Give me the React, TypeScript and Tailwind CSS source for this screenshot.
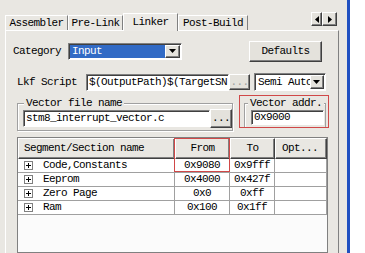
import React from 'react';

const font = "font-['Liberation_Mono',monospace] text-[11px] tracking-[-0.6px] leading-none text-black";

const Tab: React.FC<{ label: string; w: string; active?: boolean }> = ({ label, w, active }) => (
  <div
    className={`${w} flex items-center justify-center border-t border-l border-r border-t-white border-l-white border-r-[#808080] ${
      active ? 'h-[18px] bg-[#eceae6] -mb-px z-10' : 'h-[15px]'
    }`}
  >
    {label}
  </div>
);

const Raised: React.FC<{ className?: string; children?: React.ReactNode }> = ({ className = '', children }) => (
  <div
    className={`flex items-center justify-center border border-t-white border-l-white border-r-[#404040] border-b-[#404040] shadow-[inset_-1px_-1px_0_#808080] bg-[#e4e2dc] ${className}`}
  >
    {children}
  </div>
);

const Sunken: React.FC<{ className?: string; children?: React.ReactNode }> = ({ className = '', children }) => (
  <div
    className={`flex items-center border border-t-[#808080] border-l-[#808080] border-r-white border-b-white shadow-[inset_1px_1px_0_#404040] bg-white ${className}`}
  >
    {children}
  </div>
);

const Arrow: React.FC<{ dir: 'down' | 'left' | 'right' }> = ({ dir }) => {
  if (dir === 'down')
    return (
      <svg width="8" height="5" viewBox="0 0 8 5">
        <path d="M0 0h7L3.5 4z" fill="#000" />
      </svg>
    );
  return (
    <svg width="4" height="7" viewBox="0 0 4 7">
      <path d={dir === 'left' ? 'M4 0v7L0 3.5z' : 'M0 0v7l4-3.5z'} fill="#000" />
    </svg>
  );
};

const rows = [
  ['Code,Constants', '0x9080', '0x9fff'],
  ['Eeprom', '0x4000', '0x427f'],
  ['Zero Page', '0x0', '0xff'],
  ['Ram', '0x100', '0x1ff'],
];

const PlusBox = () => (
  <svg width="9" height="9" viewBox="0 0 9 9" className="shrink-0">
    <rect x="0.5" y="0.5" width="8" height="8" fill="#fff" stroke="#808080" />
    <path d="M2 4.5h5M4.5 2v5" stroke="#000" />
  </svg>
);

export default function App() {
  return (
    <div className={`w-[365px] h-[253px] flex overflow-hidden bg-[#e9e7e2] ${font}`}>
      <div className="w-[347px] flex flex-col pl-[5px]">
        {/* tab strip */}
        <div className="h-[30px] flex items-end shrink-0">
          <Tab label="Assembler" w="w-[63px]" />
          <Tab label="Pre-Link" w="w-[55px]" />
          <Tab label="Linker" w="w-[55px]" active />
          <Tab label="Post-Build" w="w-[70px]" />
          <div className="ml-auto mr-[10px] self-start mt-[12px] flex">
            <Raised className="w-[11px] h-[14px]">
              <Arrow dir="left" />
            </Raised>
            <Raised className="w-[15px] h-[14px]">
              <Arrow dir="right" />
            </Raised>
          </div>
        </div>

        {/* panel */}
        <div className="w-[334px] flex-1 border-t border-l border-r border-t-white border-l-white border-r-[#808080] flex flex-col pt-[10px] pl-[7px]">
          {/* category row */}
          <div className="h-[21px] flex items-center">
            <span className="w-[55px]">Category</span>
            <Sunken className="w-[114px] h-[17px] p-px">
              <div className="flex-1 h-full bg-[#316ac5] text-white flex items-center pl-[2px]">Input</div>
              <Raised className="w-[15px] h-full">
                <Arrow dir="down" />
              </Raised>
            </Sunken>
            <Raised className="ml-[67px] w-[73px] h-[21px]">Defaults</Raised>
          </div>

          {/* lkf row */}
          <div className="h-[18px] mt-[11px] pl-[4px] flex items-center">
            <span className="w-[69px]">Lkf Script</span>
            <Sunken className="w-[143px] h-[17px] pl-[2px] overflow-hidden whitespace-nowrap">$(OutputPath)$(TargetSN</Sunken>
            <Raised className="w-[21px] h-[16px] text-[#a0a0a0]">...</Raised>
            <Sunken className="ml-[4px] w-[72px] h-[18px] p-px">
              <div className="flex-1 pl-[2px] overflow-hidden whitespace-nowrap">Semi Auto</div>
              <Raised className="w-[14px] h-full">
                <Arrow dir="down" />
              </Raised>
            </Sunken>
          </div>

          {/* group boxes */}
          <div className="h-[36px] mt-[4px] pl-[4px] flex">
            <div className="w-[216px] pt-[8px]">
              <div className="h-[28px] border border-[#a0a0a0] shadow-[1px_1px_0_#fff,inset_1px_1px_0_#fff] relative pl-[5px] pt-[6px] flex">
                <span className="absolute -top-[6px] left-[6px] px-[2px] bg-[#e9e7e2]">Vector file name</span>
                <Sunken className="w-[187px] h-[17px] pl-[2px]">stm8_interrupt_vector.c</Sunken>
                <Raised className="w-[22px] h-[19px] -mt-px">...</Raised>
              </div>
            </div>
            <div className="ml-[6px] w-[90px] h-[33px] border border-[#d04848] pl-[4px] pr-[2px] pt-[7px]">
              <div className="h-[24px] border border-b-0 border-[#a0a0a0] shadow-[inset_1px_1px_0_#fff] relative pl-[6px] pt-[6px]">
                <span className="absolute -top-[6px] left-[3px] px-[2px] bg-[#e9e7e2]">Vector addr.</span>
                <Sunken className="w-[73px] h-[15px] pl-[2px]">0x9000</Sunken>
              </div>
            </div>
          </div>

          {/* list */}
          <div className="mt-[6px] ml-[4px] w-[311px] flex-1 border border-[#808080] bg-[#fbfbfb] relative">
            <div className="flex h-[21px] bg-[#e9e7e2]">
              <Raised className="w-[157px] h-full !justify-start pl-[5px] bg-[#e9e7e2]">Segment/Section name</Raised>
              <Raised className="w-[55px] h-full bg-[#e9e7e2]">From</Raised>
              <Raised className="w-[45px] h-full bg-[#e9e7e2]">To</Raised>
              <Raised className="w-[52px] h-full !justify-start pl-[6px] bg-[#e9e7e2]">Opt...</Raised>
            </div>
            {rows.map(([name, from, to]) => (
              <div key={name} className="flex h-[14px] border-b border-[#a0a0a0] bg-white">
                <div className="w-[157px] flex items-center pl-[6px] gap-[10px] border-r border-[#a0a0a0]">
                  <PlusBox />
                  <span>{name}</span>
                </div>
                <div className="w-[55px] flex items-center justify-center border-r border-[#a0a0a0]">{from}</div>
                <div className="w-[45px] flex items-center justify-center border-r border-[#a0a0a0]">{to}</div>
                <div className="w-[52px] border-r border-[#a0a0a0]" />
              </div>
            ))}
            <div className="absolute top-0 left-[156px] w-[56px] h-[34px] border border-[#d04848]" />
          </div>
        </div>
      </div>
      <div className="w-[3px] bg-[#2050c0]" />
      <div className="flex-1 bg-white" />
    </div>
  );
}
